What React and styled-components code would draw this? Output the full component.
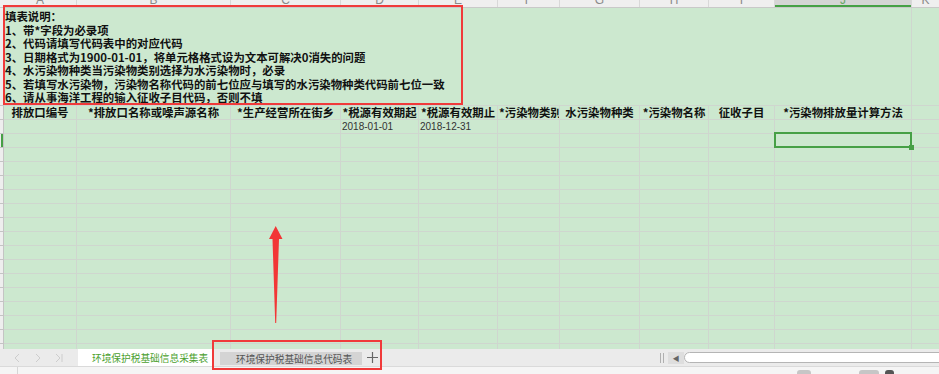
import React from 'react';
import styled, { createGlobalStyle } from 'styled-components';

const GRID = '#cfd6cf';
const CELL_BG = '#cce8cf';
const SEL = '#46a046';
const RED = '#f03a3a';

const GlobalStyle = createGlobalStyle`
  *, *::before, *::after { box-sizing: border-box; }
  html, body { margin: 0; padding: 0; background: #fff; overflow: hidden; }
  body { font-family: "Noto Sans CJK SC", "Liberation Sans", sans-serif; }
`;

const COLS = [
  { k: 'A', w: 73 },
  { k: 'B', w: 154 },
  { k: 'C', w: 110 },
  { k: 'D', w: 78 },
  { k: 'E', w: 79 },
  { k: 'F', w: 62 },
  { k: 'G', w: 80 },
  { k: 'H', w: 69 },
  { k: 'I', w: 66 },
  { k: 'J', w: 137 },
  { k: 'K', w: 28 },
];
const TEMPLATE = `4px ${COLS.map((c) => `${c.w}px`).join(' ')}`;

const HEADERS = [
  '排放口编号',
  '*排放口名称或噪声源名称',
  '*生产经营所在街乡',
  '*税源有效期起',
  '*税源有效期止',
  '*污染物类别',
  '水污染物种类',
  '*污染物名称',
  '征收子目',
  '*污染物排放量计算方法',
  '',
];

const NOTES = [
  '填表说明：',
  '1、带*字段为必录项',
  '2、代码请填写代码表中的对应代码',
  '3、日期格式为1900-01-01，将单元格格式设为文本可解决0消失的问题',
  '4、水污染物种类当污染物类别选择为水污染物时，必录',
  '5、若填写水污染物，污染物名称代码的前七位应与填写的水污染物种类代码前七位一致',
  '6、请从事海洋工程的输入征收子目代码，否则不填',
];

const Page = styled.div`
  position: relative;
  width: 939px;
  height: 374px;
  display: flex;
  flex-direction: column;
  overflow: hidden;
`;

const ColHeaderRow = styled.div`
  flex: none;
  display: grid;
  grid-template-columns: ${TEMPLATE};
  height: 8px;
  background: #efefef;
  border-bottom: 1px solid #c9c9c9;
  overflow: hidden;
`;

const ColLetter = styled.div`
  display: flex;
  align-items: flex-end;
  justify-content: center;
  border-right: 1px solid #d8d8d8;
  font: 12px/12px "Liberation Sans", sans-serif;
  overflow: hidden;
  background: ${(p) => (p.$selected ? '#d5d5d5' : 'transparent')};
  box-shadow: ${(p) => (p.$selected ? `inset 0 -2px 0 ${SEL}` : 'none')};
  color: ${(p) => (p.$selected ? '#6aa86a' : '#8a8a8a')};

  span {
    margin-bottom: 1px;
  }
`;

const Sheet = styled.div`
  flex: none;
  height: 341px;
  background: ${CELL_BG};
  overflow: hidden;
`;

const Row = styled.div`
  display: grid;
  grid-template-columns: ${TEMPLATE};
  height: ${(p) => p.$h}px;
`;

const RowHead = styled.div`
  background: #eeeeee;
  border-right: 1px solid #c4c4c4;
  border-bottom: 1px solid #c4c4c4;
  box-shadow: ${(p) => (p.$active ? `inset -2px 0 0 ${SEL}` : 'none')};
`;

const Cell = styled.div`
  position: relative;
  border-right: 1px solid ${GRID};
  border-bottom: 1px solid ${GRID};
  padding: 0 1px;
  white-space: nowrap;
  overflow: ${(p) => (p.$selected ? 'visible' : 'hidden')};
  text-align: ${(p) => p.$align || 'left'};
  font-family: ${(p) =>
    p.$head ? '"Noto Sans CJK SC", sans-serif' : '"Liberation Sans", Arial, sans-serif'};
  font-size: ${(p) => (p.$head ? '11.4px' : '10px')};
  font-weight: ${(p) => (p.$head ? 700 : 400)};
  line-height: 13px;
  color: ${(p) => (p.$head ? '#111' : '#333')};
  z-index: ${(p) => (p.$selected ? 2 : 'auto')};

  ${(p) =>
    p.$selected &&
    `
    &::after {
      content: '';
      position: absolute;
      top: -2px; left: -1px; right: -1px; bottom: -1px;
      border: 2px solid ${SEL};
    }
    &::before {
      content: '';
      position: absolute;
      right: -3px; bottom: -3px;
      width: 5px; height: 5px;
      background: ${SEL};
      z-index: 3;
    }
  `}
`;

const MergedCell = styled.div`
  grid-column: span 10;
  border-right: 1px solid ${GRID};
  border-bottom: 1px solid ${GRID};
  padding: 2px 0 0 1px;
  font-family: "Noto Sans CJK SC", sans-serif;
  font-size: 11.4px;
  font-weight: 700;
  line-height: 13.5px;
  color: #111;
  white-space: nowrap;
  overflow: hidden;
`;

const NoteLine = styled.div`
  height: 13.5px;
`;

const TabBar = styled.div`
  flex: none;
  height: 17px;
  display: flex;
  align-items: stretch;
  background: #ebebeb;
`;

const NavGroup = styled.div`
  flex: none;
  width: 78px;
  display: flex;
  align-items: center;
  gap: 13px;
  padding-left: 13px;
  color: #cdcdcd;
`;

const Tab = styled.div`
  flex: none;
  display: flex;
  align-items: center;
  font-family: "Noto Sans CJK SC", sans-serif;
  font-size: 9.7px;
  white-space: nowrap;
  overflow: hidden;
  ${(p) =>
    p.$active
      ? `
    width: 134px;
    padding-left: 14px;
    background: #ffffff;
    color: #4c9f2f;
  `
      : `
    width: 142px;
    margin: 3px 0 1px 8px;
    padding-left: 16px;
    background: #d4d4d4;
    color: #555;
  `}
`;

const PlusBtn = styled.div`
  flex: none;
  width: 20px;
  display: flex;
  align-items: center;
  justify-content: center;
  color: #666;
`;

const ScrollGroup = styled.div`
  margin-left: auto;
  flex: none;
  width: 279px;
  display: flex;
  align-items: center;
`;

const Grip = styled.div`
  height: 10px;
  border-left: 1px solid #b0b0b0;
  border-right: 1px solid #b0b0b0;
  width: 4px;
  margin-right: 4px;
`;

const ScrollArrow = styled.div`
  width: 16px;
  height: 12px;
  background: #dedede;
  display: flex;
  align-items: center;
  justify-content: center;
  font-size: 7px;
  color: #666;
`;

const ScrollThumb = styled.div`
  flex: 1;
  height: 11px;
  background: #fff;
  border: 1px solid #b5b5b5;
  border-radius: 6px;
  margin-right: -6px;
`;

const StatusBar = styled.div`
  flex: 1;
  display: flex;
  align-items: flex-end;
  background: #f5f5f5;
  border-top: 1px solid #dadada;
`;

const StatusDivider = styled.div`
  margin-left: 17px;
  width: 1px;
  height: 7px;
  background: #d6d6d6;
`;

const StatusBtn = styled.div`
  margin-left: ${(p) => p.$ml}px;
  width: ${(p) => p.$w}px;
  height: 4px;
  border-radius: 3px 3px 0 0;
  background: ${(p) => p.$bg};
`;

const RedBox = styled.div`
  position: absolute;
  left: ${(p) => p.$x}px;
  top: ${(p) => p.$y}px;
  width: ${(p) => p.$w}px;
  height: ${(p) => p.$h}px;
  border: 2px solid ${RED};
  pointer-events: none;
  z-index: 5;
`;

const ArrowSvg = styled.svg`
  position: absolute;
  left: 262px;
  top: 222px;
  z-index: 5;
`;

const Chevron = ({ d }) => (
  <svg width="8" height="10" viewBox="0 0 8 10" fill="none" stroke="currentColor" strokeWidth="1">
    <path d={d} />
  </svg>
);

export default function App() {
  const rows = [];
  for (let i = 0; i < 18; i++) rows.push(i);

  return (
    <Page>
      <GlobalStyle />
      <ColHeaderRow>
        <div />
        {COLS.map((c) => (
          <ColLetter key={c.k} $selected={c.k === 'J'}>
            <span>{c.k}</span>
          </ColLetter>
        ))}
      </ColHeaderRow>

      <Sheet>
        <Row $h={98}>
          <RowHead />
          <MergedCell>
            {NOTES.map((n) => (
              <NoteLine key={n}>{n}</NoteLine>
            ))}
          </MergedCell>
          <Cell />
        </Row>
        <Row $h={14}>
          <RowHead />
          {HEADERS.map((h, i) => (
            <Cell key={i} $head $align="center">
              {h}
            </Cell>
          ))}
        </Row>
        <Row $h={14}>
          <RowHead />
          {COLS.map((c) => (
            <Cell key={c.k}>
              {c.k === 'D' ? '2018-01-01' : c.k === 'E' ? '2018-12-31' : ''}
            </Cell>
          ))}
        </Row>
        {rows.map((r) => (
          <Row key={r} $h={14}>
            <RowHead $active={r === 0} />
            {COLS.map((c) => (
              <Cell key={c.k} $selected={r === 0 && c.k === 'J'} />
            ))}
          </Row>
        ))}
      </Sheet>

      <TabBar>
        <NavGroup>
          <Chevron d="M6 1 L2 5 L6 9" />
          <Chevron d="M2 1 L6 5 L2 9" />
          <Chevron d="M1 1 L5 5 L1 9 M7 1 L7 9" />
        </NavGroup>
        <Tab $active>环境保护税基础信息采集表</Tab>
        <Tab>环境保护税基础信息代码表</Tab>
        <PlusBtn>
          <svg width="11" height="11" viewBox="0 0 11 11" stroke="currentColor" strokeWidth="1.2">
            <path d="M5.5 0 V11 M0 5.5 H11" />
          </svg>
        </PlusBtn>
        <ScrollGroup>
          <Grip />
          <ScrollArrow>◀</ScrollArrow>
          <ScrollThumb />
        </ScrollGroup>
      </TabBar>

      <StatusBar>
        <StatusDivider />
        <StatusBtn $ml={779} $w={14} $bg="#c6c6c6" />
        <StatusBtn $ml={48} $w={20} $bg="#c6c6c6" />
        <StatusBtn $ml={6} $w={9} $bg="#555" />
      </StatusBar>

      <RedBox $x={3} $y={5} $w={460} $h={100} />
      <RedBox $x={212} $y={340} $w={170} $h={30} />

      <ArrowSvg width="28" height="106" viewBox="0 0 28 106">
        <polygon
          points="13.7,4 20.5,17 17,17 14.2,101 13.2,101 10.5,17 7,17"
          fill="#f23636"
        />
      </ArrowSvg>
    </Page>
  );
}
